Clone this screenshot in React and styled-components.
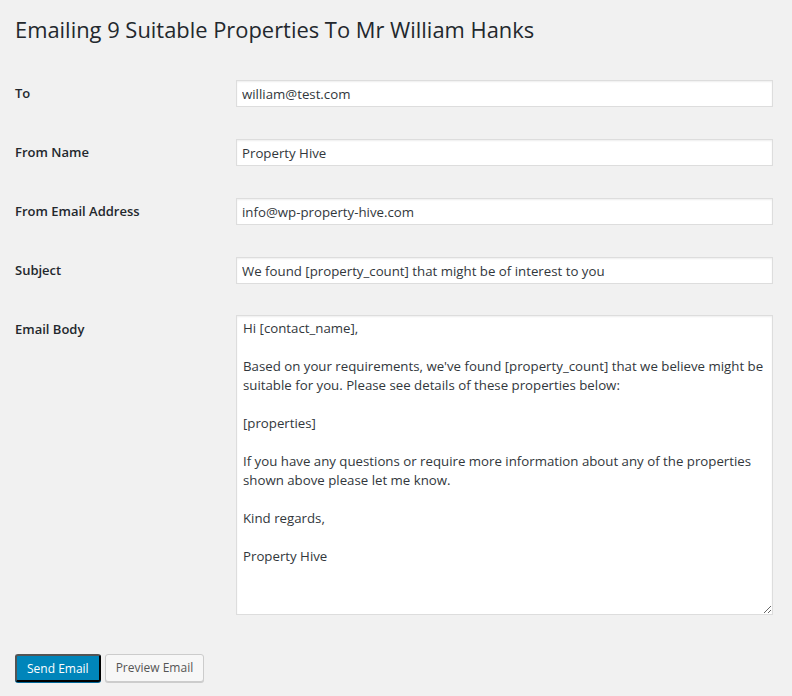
import React from "react"
import styled, { createGlobalStyle } from "styled-components"

const GlobalStyle = createGlobalStyle`
  html, body {
    margin: 0;
    padding: 0;
    background: #f1f1f1;
  }
  body {
    font-family: "Open Sans", "Noto Sans", sans-serif;
    color: #23282d;
    font-size: 13px;
  }
  * {
    box-sizing: border-box;
  }
`

const Wrap = styled.div`
  padding: 15px 19px 20px 15px;
`

const Heading = styled.h1`
  margin: 0;
  font-size: 21.9px;
  font-weight: 400;
  line-height: 30px;
  color: #23282d;
`

const FormTable = styled.form`
  display: grid;
  grid-template-columns: 221px 1fr;
  row-gap: 32px;
  margin-top: 35px;
`

const Label = styled.label`
  font-weight: 600;
  font-size: 13px;
  line-height: 27px;
  color: #23282d;
`

const Field = styled.input`
  display: block;
  width: 100%;
  height: 27px;
  margin: 0;
  padding: 2px 5px;
  font-family: inherit;
  font-size: 13.25px;
  color: #32373c;
  background: #fff;
  border: 1px solid #ddd;
  box-shadow: inset 0 1px 2px rgba(0, 0, 0, 0.07);
  outline: none;
`

const Body = styled.textarea`
  display: block;
  width: 100%;
  height: 300px;
  margin: -1px 0 0;
  padding: 3px 6px 2px;
  font-family: inherit;
  font-size: 13.25px;
  line-height: 19px;
  color: #32373c;
  background: #fff;
  border: 1px solid #ddd;
  box-shadow: inset 0 1px 2px rgba(0, 0, 0, 0.07);
  outline: none;
  resize: vertical;
`

const Actions = styled.div`
  display: flex;
  gap: 4px;
  margin-top: 39px;
`

const Button = styled.button`
  height: 28px;
  padding: 0 10px 1px;
  font-family: inherit;
  font-size: 12px;
  line-height: 26px;
  border-radius: 3px;
  border: 1px solid ${p => (p.$primary ? "#0073aa #006799 #006799" : "#ccc")};
  background: ${p => (p.$primary ? "#0085ba" : "#f7f7f7")};
  color: ${p => (p.$primary ? "#fff" : "#555")};
  box-shadow: 0 1px 0 ${p => (p.$primary ? "#006799" : "#ccc")};
  cursor: pointer;
`

const bodyText = `Hi [contact_name],

Based on your requirements, we've found [property_count] that we believe might be suitable for you. Please see details of these properties below:

[properties]

If you have any questions or require more information about any of the properties shown above please let me know.

Kind regards,

Property Hive`

const App = () => {
  return (
    <React.Fragment>
      <GlobalStyle />
      <Wrap>
        <Heading>Emailing 9 Suitable Properties To Mr William Hanks</Heading>
        <FormTable onSubmit={e => e.preventDefault()}>
          <Label htmlFor="to">To</Label>
          <Field id="to" type="text" defaultValue="william@test.com" />

          <Label htmlFor="from_name">From Name</Label>
          <Field id="from_name" type="text" defaultValue="Property Hive" />

          <Label htmlFor="from_email">From Email Address</Label>
          <Field
            id="from_email"
            type="text"
            defaultValue="info@wp-property-hive.com"
          />

          <Label htmlFor="subject">Subject</Label>
          <Field
            id="subject"
            type="text"
            defaultValue="We found [property_count] that might be of interest to you"
          />

          <Label htmlFor="body">Email Body</Label>
          <Body id="body" defaultValue={bodyText} />
        </FormTable>
        <Actions>
          <Button $primary type="button">
            Send Email
          </Button>
          <Button type="button">Preview Email</Button>
        </Actions>
      </Wrap>
    </React.Fragment>
  )
}

export default App
